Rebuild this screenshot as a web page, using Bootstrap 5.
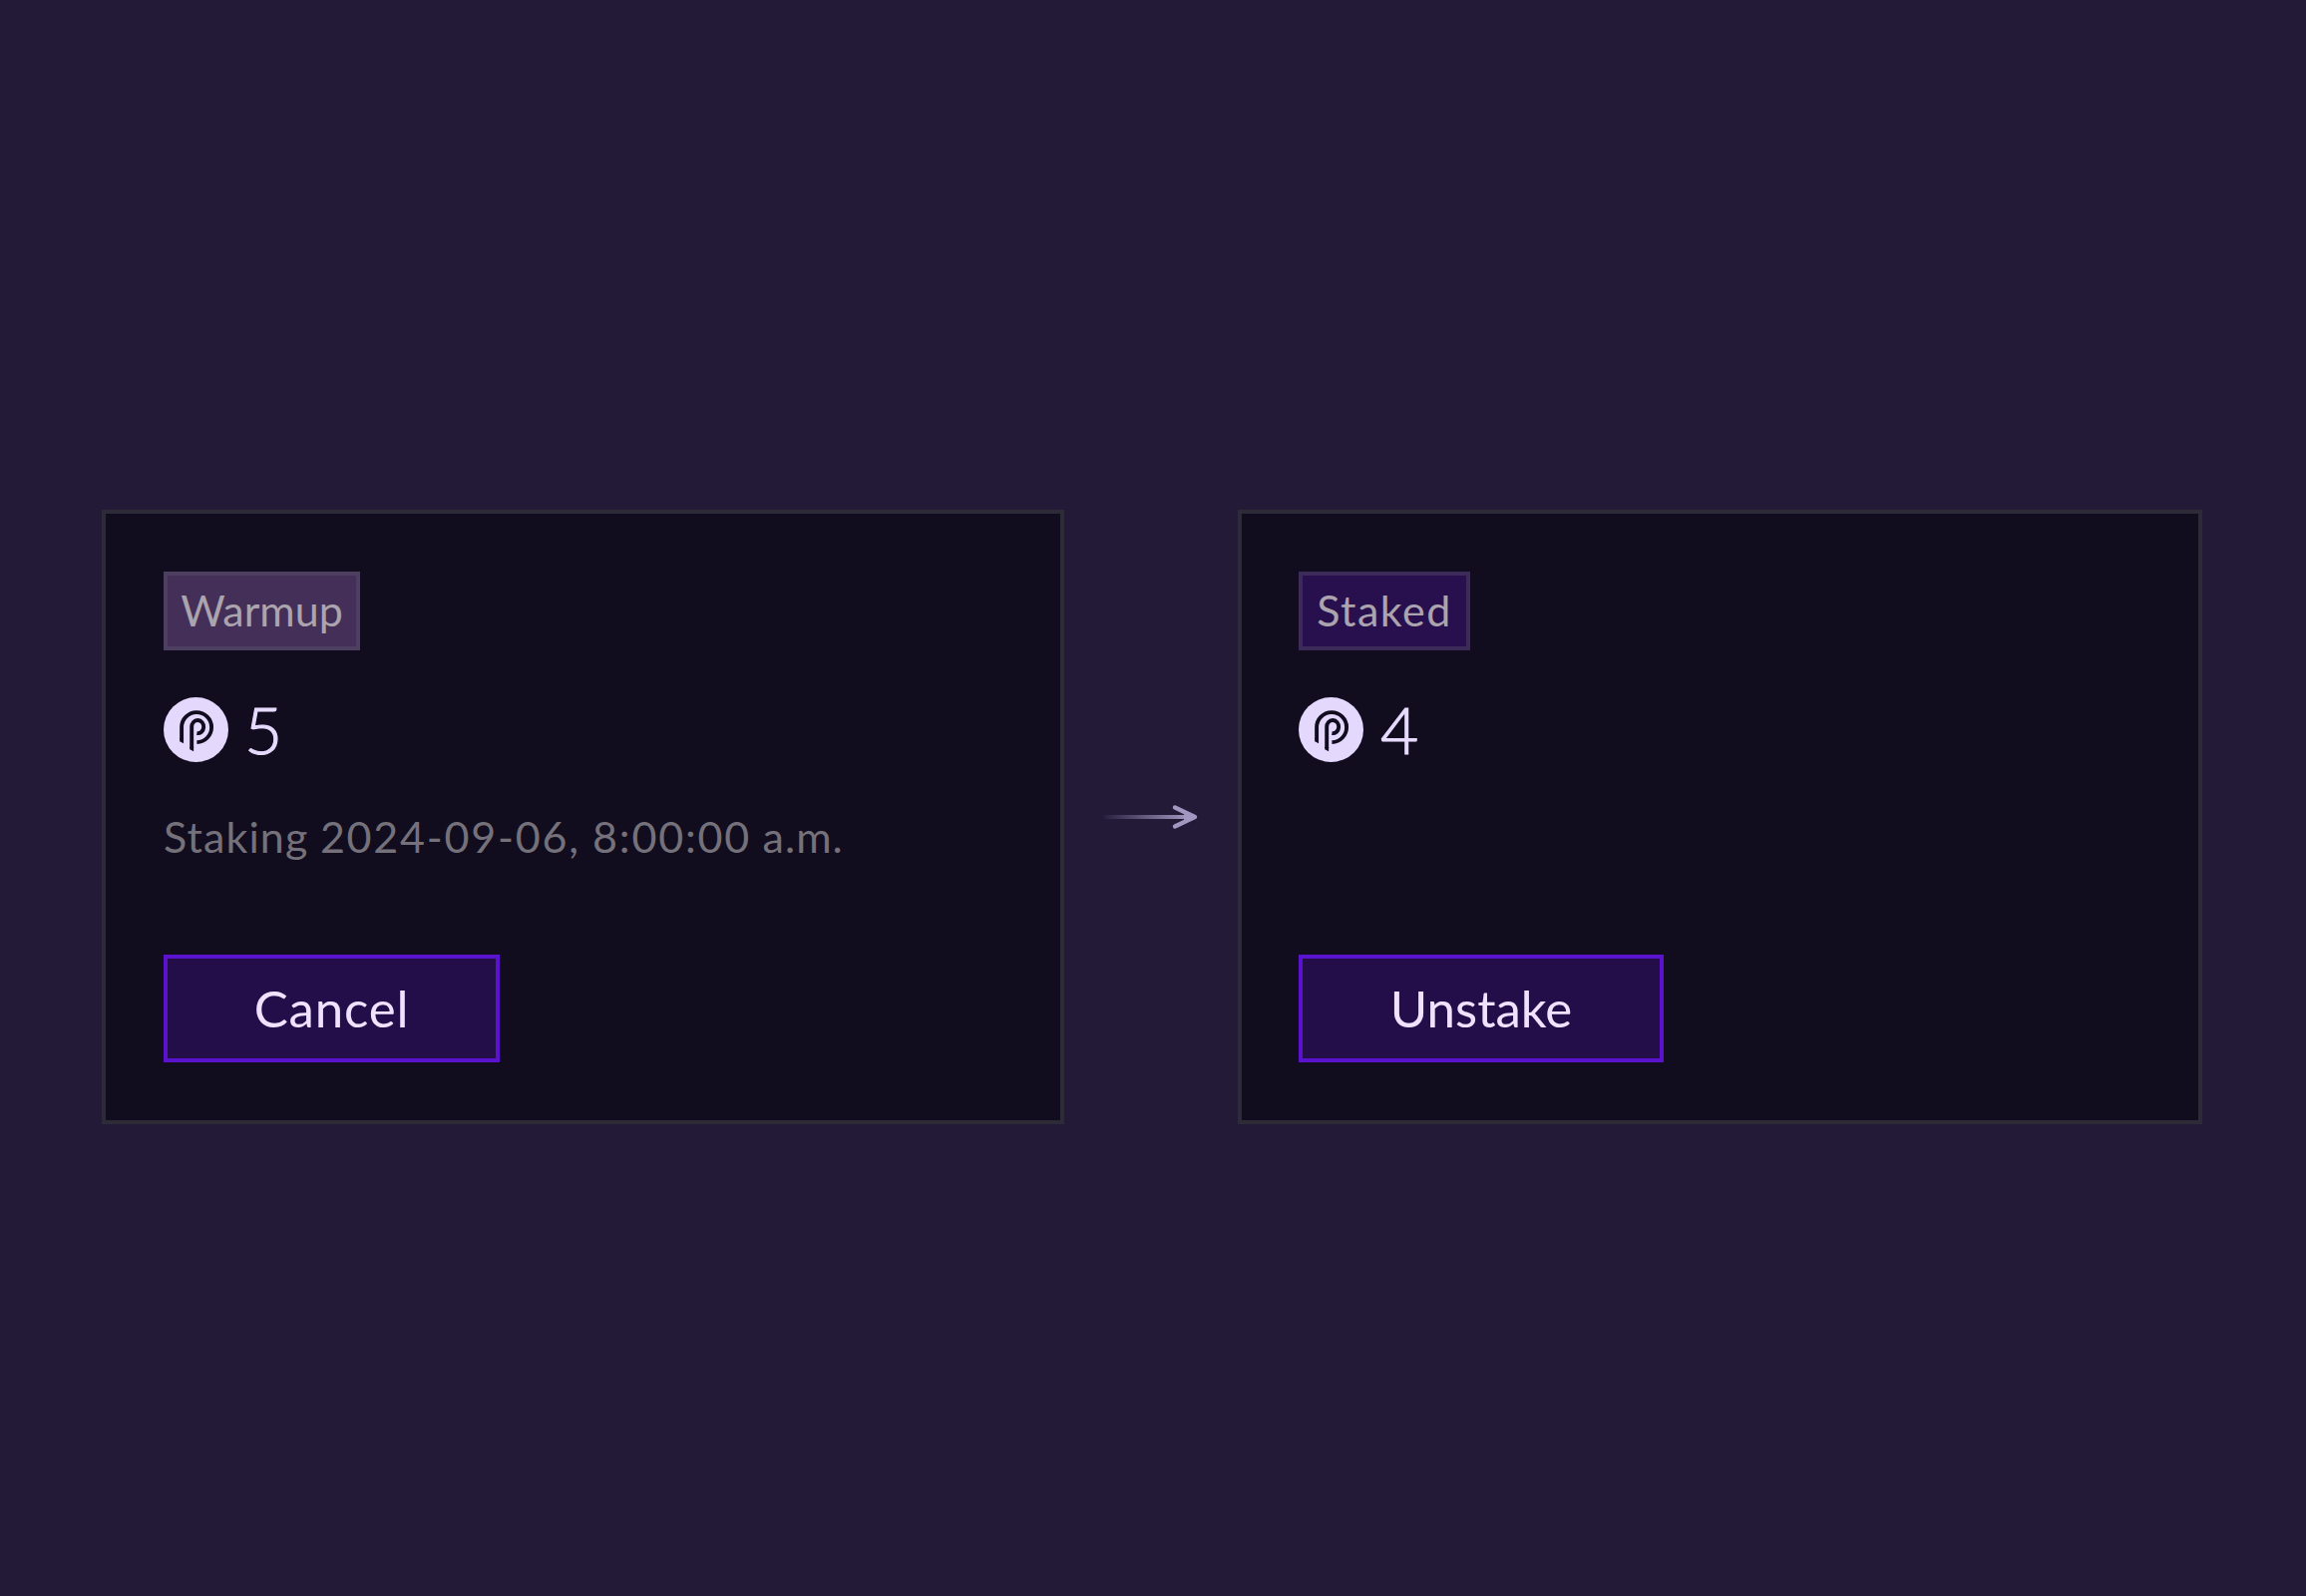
<!DOCTYPE html>
<html lang="en">
<head>
<meta charset="utf-8">
<meta name="viewport" content="width=device-width, initial-scale=1">
<title>Staking</title>
<link href="https://cdn.jsdelivr.net/npm/bootstrap@5.3.0/dist/css/bootstrap.min.css" rel="stylesheet">
<style>
body { background: #221a37; font-family: Lato, "Open Sans", sans-serif; color: #e6dafe; }
.stage { height: 1600px; padding: 511px 104px 0 102px; }
.position-card { width: 965px; height: 616px; background: #110d1e; border: 4px solid #2e2b38; border-radius: 0; padding: 58px 57px 58px; }
.position-card.is-warmup { padding-left: 58px; }
.position-card.is-staked { width: 967px; }
.state-tag { height: 79px; border: 4px solid #4d3f60; background: #432f57; color: #aba4ae; font-size: 43px; line-height: 70px; }
.tag-warmup { width: 197px; }
.tag-staked { width: 172px; background: #28104f; border-color: #3c2b59; letter-spacing: 1.5px; }
.amount { margin-top: 47px; height: 65px; gap: 16px; font-size: 66px; line-height: 65px; font-weight: 300; }
.amount span { -webkit-text-stroke: 1.1px #e6dafe; margin-top: -2px; }
.is-staked .amount { gap: 17px; }
.when { margin-top: 43px; height: 66px; font-size: 43px; line-height: 64px; color: #75717a; white-space: nowrap; letter-spacing: 1.1px; word-spacing: -.6px; }
.when time { letter-spacing: 1.8px; }
.action-btn { --bs-btn-color: #f0e2ff; --bs-btn-bg: #240e49; --bs-btn-border-color: #5a12cc; --bs-btn-hover-bg: #32126a; --bs-btn-hover-color: #fff; --bs-btn-hover-border-color: #6a1ee0; height: 108px; border-width: 4px; border-radius: 0; font-size: 51px; line-height: 1; padding: 0 0 1px; }
.btn-cancel { width: 337px; letter-spacing: .8px; }
.btn-unstake { width: 366px; }
</style>
<script src="https://cdn.jsdelivr.net/npm/bootstrap@5.3.0/dist/js/bootstrap.bundle.min.js" defer></script>
</head>
<body>
<svg class="d-none" xmlns="http://www.w3.org/2000/svg">
  <symbol id="coin" viewBox="0 0 65 65">
    <circle cx="32.5" cy="32.5" r="32.5" fill="#e4d8fd"/>
    <g fill="none" stroke="#110d1e" stroke-width="3.9">
      <path d="M33.400 45.100A15 15 0 1 0 18.100 30.200V42"/>
      <path d="M33.400 36.100A6 6.600 0 1 0 28.200 29.800V51"/>
    </g>
    <path fill="#110d1e" d="M16.150 41H20.050V46.300L16.150 44.300ZM26.250 50H30.150V54.300L26.250 52.300Z"/>
  </symbol>
</svg>
<main class="stage d-flex justify-content-between align-items-start">
  <section class="position-card is-warmup card d-flex flex-column align-items-start">
    <div class="state-tag tag-warmup text-center">Warmup</div>
    <div class="amount d-flex align-items-center"><svg width="65" height="65"><use href="#coin"/></svg><span>5</span></div>
    <div class="when">Staking <time datetime="2024-09-06T08:00:00">2024-09-06, 8:00:00</time> a.m.</div>
    <button class="action-btn btn btn-cancel mt-auto" type="button">Cancel</button>
  </section>
  <svg style="margin-top:293px" width="94" height="30" viewBox="0 0 94 30" fill="none">
    <defs><linearGradient id="fade" gradientUnits="userSpaceOnUse" x1="0" y1="15" x2="84" y2="15"><stop stop-color="#a197c0" stop-opacity=".05"/><stop offset="1" stop-color="#a197c0"/></linearGradient></defs>
    <path d="M0 15H90" stroke="url(#fade)" stroke-width="4"/>
    <path d="M71 5.500L91 15L71 24.500" stroke="#a197c0" stroke-width="4.400" stroke-linecap="round" stroke-linejoin="round"/>
    <path d="M80 12L90 15L80 18Z" fill="#a197c0"/>
  </svg>
  <section class="position-card is-staked card d-flex flex-column align-items-start">
    <div class="state-tag tag-staked text-center">Staked</div>
    <div class="amount d-flex align-items-center"><svg width="65" height="65"><use href="#coin"/></svg><span>4</span></div>
    <button class="action-btn btn btn-unstake mt-auto" type="button">Unstake</button>
  </section>
</main>
</body>
</html>
